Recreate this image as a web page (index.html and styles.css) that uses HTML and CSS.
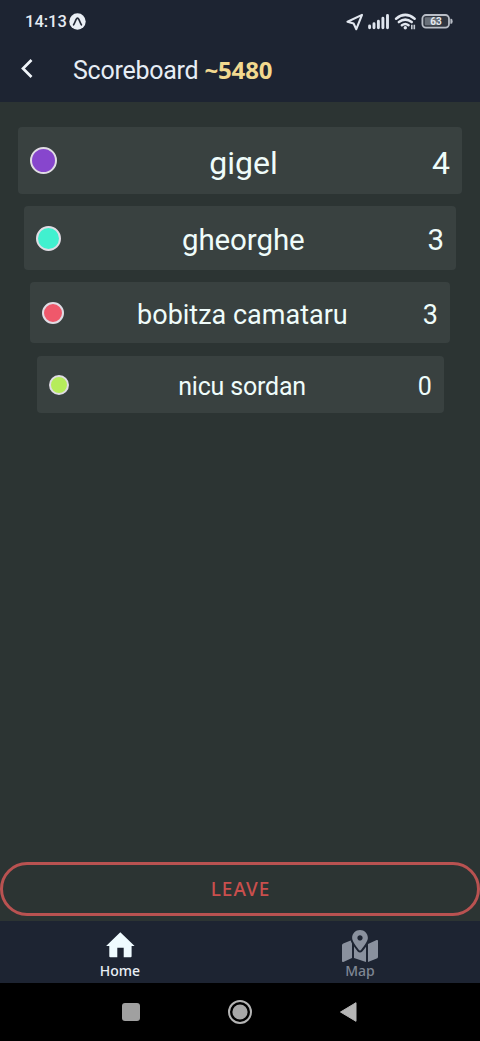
FILE: index.html
```
<!DOCTYPE html>
<html lang="en">
<head>
<meta charset="utf-8">
<title>Scoreboard</title>
<link rel="stylesheet" href="styles.css">
</head>
<body>
<div class="screen">
  <header class="top">
    <div class="status">
      <span class="clock">14:13</span>
      <svg class="app-badge" width="17" height="17" viewBox="0 0 17 17"><circle cx="8.5" cy="8.5" r="8.2" fill="#eaeff5"/><path d="M4.6 11.800C6 10 6.900 5.200 8.500 5.200S11 10 12.400 11.800" fill="none" stroke="#252b38" stroke-width="1.700" stroke-linecap="round"/></svg>
      <svg class="signals" width="110" height="20" viewBox="0 0 110 20" fill="none">
        <path d="M16 3.900L1.500 10.700L7.600 12.500L10.300 18.200Z" stroke="#e2e7ef" stroke-width="2.100" stroke-linejoin="round"/>
        <path d="M23.600 15v1.700M28 12.800v3.900M32.400 10.200v6.500M36.900 7.300v9.400M41.500 4.500v12.200" stroke="#dfe5ee" stroke-width="2.900" stroke-linecap="round"/>
        <path d="M50.100 7.700Q59.300 .1 68.600 7.700M52.900 11.100Q59.300 6.100 65.700 11.100M55.900 14.300Q59.300 11.800 62.500 14.300" stroke="#e2e7ef" stroke-width="2.500" stroke-linecap="round"/>
        <circle cx="59.300" cy="16.800" r="1.700" fill="#e2e7ef"/>
        <path d="M65.800 13.700v4.500M68.300 13.700v4.500" stroke="#c5cbd4" stroke-width="1.600"/>
        <rect x="76.400" y="4" width="26.600" height="12.600" rx="3.600" fill="#303641" stroke="#b9bec7" stroke-width="1.800"/>
        <rect x="78.800" y="6.300" width="14" height="8" rx="1" fill="#697079"/>
        <path d="M104.400 7.800h1q1.200 0 1.200 2.500t-1.200 2.500h-1z" fill="#b9bec7"/>
        <text class="battery-text" x="89.900" y="14" text-anchor="middle">63</text>
      </svg>
    </div>
    <div class="title-bar">
      <svg class="back" width="14" height="20" viewBox="0 0 14 20"><path d="M11.500 1L3 9.500L11.500 18" fill="none" stroke="#f0f5fa" stroke-width="2.700"/></svg>
      <h1 class="title">Scoreboard</h1>
      <span class="room">~5480</span>
    </div>
  </header>
  <main class="board">
    <div class="player first"><i class="dot purple"></i><span class="name">gigel</span><span class="score">4</span></div>
    <div class="player second"><i class="dot teal"></i><span class="name">gheorghe</span><span class="score">3</span></div>
    <div class="player third"><i class="dot red"></i><span class="name">bobitza camataru</span><span class="score">3</span></div>
    <div class="player fourth"><i class="dot lime"></i><span class="name">nicu sordan</span><span class="score">0</span></div>
    <button class="leave">LEAVE</button>
  </main>
  <nav class="tabs">
    <div class="tab active">
      <svg width="36" height="34" viewBox="0 0 36 34"><path d="M18.300 3.200L32.600 17H29.600V27.200Q29.600 28.200 28.600 28.200H21.700V18.700H15.300V28.200H8.300Q7.300 28.200 7.300 27.200V17H4.100Z" fill="#effbff"/></svg>
      <span>Home</span>
    </div>
    <div class="tab">
      <svg width="36" height="34" viewBox="0 0 576 544"><g transform="translate(0 16)" fill="#8a919e"><path fill-rule="evenodd" d="M288 0c-69.590 0-126 56.410-126 126 0 56.260 82.350 158.800 113.900 196.020 6.390 7.540 17.820 7.540 24.200 0C331.650 284.800 414 182.260 414 126 414 56.410 357.590 0 288 0zm0 168c-23.200 0-42-18.800-42-42s18.800-42 42-42 42 18.800 42 42-18.800 42-42 42z"/><path d="M20.120 215.950A32 32 0 0 0 0 245.660v250.320c0 11.320 11.430 19.060 21.940 14.860L160 448V214.920c-8.840-15.980-16.070-31.540-21.250-46.420L20.120 215.950zM288 359.670c-14.070 0-27.380-6.180-36.510-16.960-19.660-23.200-40.570-49.620-59.490-76.720v182l192 64V266c-18.920 27.090-39.820 53.520-59.490 76.720-9.130 10.770-22.440 16.950-36.510 16.950zm266.060-198.510L416 224v288l139.880-55.950A31.996 31.996 0 0 0 576 426.340V176.020c0-11.320-11.430-19.060-21.940-14.860z"/></g></svg>
      <span>Map</span>
    </div>
  </nav>
  <footer class="system">
    <svg width="20" height="20" viewBox="0 0 20 20"><rect x="1" y="1" width="18" height="18" rx="3" fill="#a0a0a0"/></svg>
    <svg width="26" height="26" viewBox="0 0 26 26"><circle cx="13" cy="13" r="11" fill="none" stroke="#b4b4b4" stroke-width="2"/><circle cx="13" cy="13" r="7.600" fill="#a8a8a8"/></svg>
    <svg width="20" height="22" viewBox="0 0 20 22"><path d="M1.500 11L17 1.700V20.300Z" fill="#b6b6b6" stroke="#b6b6b6" stroke-linejoin="round"/></svg>
  </footer>
</div>
</body>
</html>
```
FILE: styles.css
```
* { box-sizing: border-box; }
body { margin: 0; background: #000; font-family: Roboto, sans-serif; }
.screen { width: 480px; height: 1041px; display: flex; flex-direction: column; overflow: hidden; }
.top { height: 102px; background: #1d2432; flex: none; }
.status { height: 42px; display: flex; align-items: center; padding: 0 24px 0 25px; }
.clock { font-size: 16.500px; font-weight: 500; color: #e6ebf2; width: 43px; white-space: nowrap; line-height: 20px; padding-top: 2px; }
.app-badge { margin-left: 1px; }
.signals { margin-left: auto; }
.battery-text { font: 700 10px Roboto, sans-serif; fill: #e5e9ef; }
.title-bar { display: flex; align-items: center; height: 54px; padding-left: 20px; color: #e6edf5; }
.title { margin: 0 0 0 39px; padding-top: 3px; font-size: 25px; letter-spacing: -.25px; line-height: 32px; font-weight: 400; }
.room { margin-left: 6px; padding-top: 1px; font: 700 24px/32px "Noto Sans", sans-serif; letter-spacing: -.15px; color: #f2d98f; }
.board { flex: 1; background: #2c3433; padding-top: 25px; display: flex; flex-direction: column; align-items: center; }
.player { display: flex; align-items: center; background: #394140; border-radius: 4px; padding: 0 12px; color: #effcfa; flex: none; }
.name { flex: 1; text-align: center; padding-top: 4px; margin-left: -2px; }
.score { padding-top: 4px; }
.first { width: 444px; height: 67px; font-size: 32px; margin-bottom: 12px; }
.second { width: 432px; height: 64px; font-size: 29.500px; letter-spacing: -.1px; margin-bottom: 12px; }
.third { width: 420px; height: 61px; font-size: 27px; margin-bottom: 13px; }
.fourth { width: 407px; height: 57px; font-size: 25px; letter-spacing: -.2px; }
.dot { border-radius: 50%; border: 2px solid #e0dce4; flex: none; }
.first .dot { width: 27px; height: 27px; }
.second .dot { width: 25px; height: 25px; }
.third .dot { width: 22px; height: 22px; }
.fourth .dot { width: 20px; height: 20px; }
.purple { background: #8746cd; }
.teal { background: #41f0cf; }
.red { background: #ef586b; }
.lime { background: #b6ec5b; }
.leave { margin: auto 0 5px; width: 480px; height: 54px; border: 3px solid #b95251; border-radius: 27px; background: transparent; color: #c94f4d; font: 500 19px "Noto Sans", sans-serif; letter-spacing: 1px; padding: 0 0 0 1px; }
.tabs { height: 62px; background: #1d2432; display: flex; flex: none; }
.tab { flex: 1; display: flex; flex-direction: column; align-items: center; padding-top: 8px; color: #7f8794; font: 500 14px/16px "Noto Sans", sans-serif; }
.active { color: #e9eff5; }
.system { height: 58px; flex: none; background: #000; display: flex; align-items: center; justify-content: center; gap: 86px; }
```
